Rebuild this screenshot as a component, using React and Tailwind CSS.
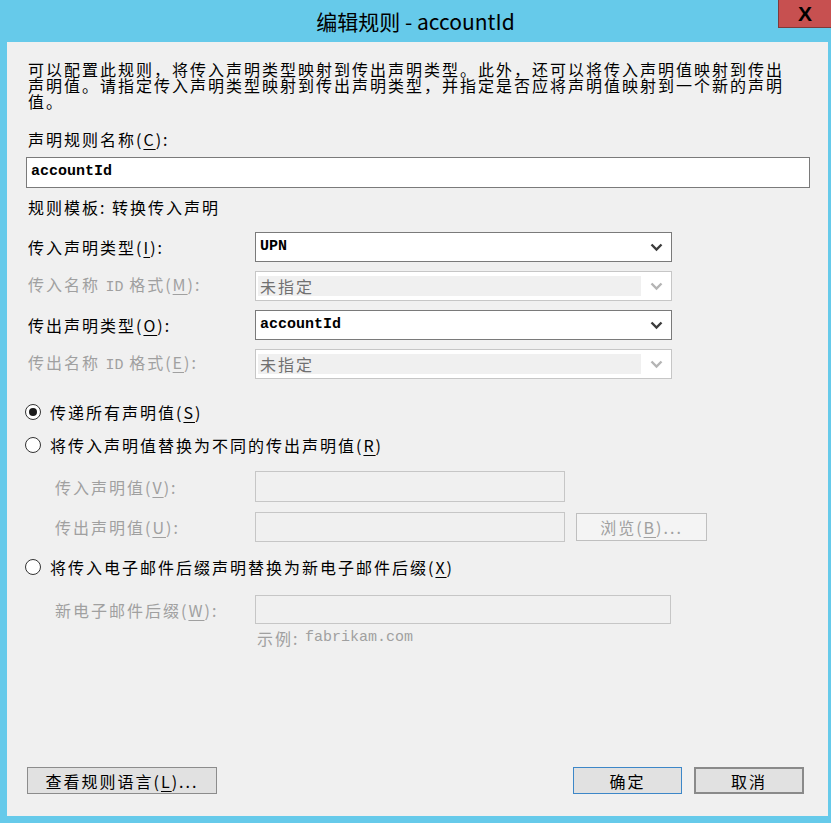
import React from 'react';

const mono = "font-['Liberation_Mono','DejaVu_Sans_Mono',monospace] tracking-normal";

const Key = ({ k }) => <span className="underline underline-offset-[3px] decoration-1">{k}</span>;

const Chevron = ({ disabled }) => (
  <svg width="13" height="9" viewBox="0 0 13 9">
    <path d="M1.5 1.5 L6.5 6.5 L11.5 1.5" stroke={disabled ? '#b4b4b4' : '#3c3c3c'} strokeWidth="2.4" fill="none" />
  </svg>
);

const Select = ({ value, disabled }) => {
  if (disabled) {
    return (
      <div className="w-[417px] h-[30px] border border-[#c6c6c6] bg-white flex items-stretch py-[4px] pl-[2px]">
        <div className="flex-1 bg-[#f0f0f0] flex items-center pl-[2px] text-[#707070]">{value}</div>
        <div className="w-[30px] flex items-center justify-center">
          <Chevron disabled />
        </div>
      </div>
    );
  }
  return (
    <div className="w-[417px] h-[30px] border border-[#7a7a7a] bg-white flex items-center">
      <div className={`flex-1 pl-[4px] text-[15px] font-bold text-black ${mono}`}>{value}</div>
      <div className="w-[30px] flex items-center justify-center">
        <Chevron />
      </div>
    </div>
  );
};

const Radio = ({ checked, children }) => (
  <div className="h-[20px] flex items-center -ml-[3px]">
    <div className="w-[16px] h-[16px] rounded-full border border-[#333] bg-white flex items-center justify-center">
      {checked && <div className="w-[8px] h-[8px] rounded-full bg-[#1a1a1a]" />}
    </div>
    <span className="ml-[9px] text-black">{children}</span>
  </div>
);

const Row = ({ label, gray, indent, children, className = '' }) => (
  <div className={`flex items-center ${className}`}>
    <div className={`${indent ? 'w-[200px] ml-[27px]' : 'w-[227px]'} ${gray ? 'text-[#a0a0a0]' : 'text-black'}`}>
      {label}
    </div>
    {children}
  </div>
);

const DisabledInput = ({ w, h }) => (
  <div className={`${w} ${h} border border-[#c6c6c6] bg-[#f0f0f0]`} />
);

export default function App() {
  return (
    <div className="w-[831px] h-[823px] bg-[#66caea] flex flex-col font-['Noto_Sans_CJK_SC','Noto_Sans',sans-serif]">
      {/* title bar */}
      <div className="relative h-[42px] flex items-center justify-center">
        <span className="text-[21px] text-black leading-none">编辑规则 - accountId</span>
        <div className="absolute right-0 top-0 w-[53px] h-[28px] bg-[#c75050] border-l border-b border-[#7d3a3a] flex items-center justify-center">
          <span className="text-[21px] font-bold text-black font-['Liberation_Sans',sans-serif] leading-none">X</span>
        </div>
      </div>

      {/* body */}
      <div className="ml-[7px] mr-[3px] h-[774px] bg-[#f0f0f0] flex flex-col pl-[21px] pb-[22px] text-[16px] tracking-[2px]">
        <div className="mt-[19px] text-[16px] tracking-[2px] leading-[16px] text-black whitespace-nowrap">
          <div>可以配置此规则，将传入声明类型映射到传出声明类型。此外，还可以将传入声明值映射到传出</div>
          <div>声明值。请指定传入声明类型映射到传出声明类型，并指定是否应将声明值映射到一个新的声明</div>
          <div>值。</div>
        </div>

        <div className="mt-[20px] h-[20px] flex items-center">
          声明规则名称(<Key k="C" />):
        </div>
        <div className="mt-[8px] -ml-[2px] w-[784px] h-[31px] border border-[#7a7a7a] bg-white flex items-center pl-[4px]">
          <span className={`text-[15px] font-bold text-black ${mono}`}>accountId</span>
        </div>
        <div className="mt-[9px] h-[20px] flex items-center">规则模板:&nbsp;转换传入声明</div>

        <Row label={<>传入声明类型(<Key k="I" />):</>} className="mt-[15px]">
          <Select value="UPN" />
        </Row>
        <Row
          gray
          label={<>传入名称 <span className={`${mono} text-[15px]`}>ID</span> 格式(<Key k="M" />):</>}
          className="mt-[9px]"
        >
          <Select value="未指定" disabled />
        </Row>
        <Row label={<>传出声明类型(<Key k="O" />):</>} className="mt-[9px]">
          <Select value="accountId" />
        </Row>
        <Row
          gray
          label={<>传出名称 <span className={`${mono} text-[15px]`}>ID</span> 格式(<Key k="E" />):</>}
          className="mt-[9px]"
        >
          <Select value="未指定" disabled />
        </Row>

        <div className="mt-[23px]">
          <Radio checked>传递所有声明值(<Key k="S" />)</Radio>
        </div>
        <div className="mt-[13px]">
          <Radio>将传入声明值替换为不同的传出声明值(<Key k="R" />)</Radio>
        </div>

        <Row gray indent label={<>传入声明值(<Key k="V" />):</>} className="mt-[16px]">
          <DisabledInput w="w-[310px]" h="h-[31px]" />
        </Row>
        <Row gray indent label={<>传出声明值(<Key k="U" />):</>} className="mt-[10px]">
          <DisabledInput w="w-[310px]" h="h-[30px]" />
          <div className="ml-[11px] w-[131px] h-[28px] border border-[#bfbfbf] bg-[#f4f4f4] flex items-center justify-center text-[#a0a0a0]">
            浏览(<Key k="B" />)...
          </div>
        </Row>

        <div className="mt-[15px]">
          <Radio>将传入电子邮件后缀声明替换为新电子邮件后缀(<Key k="X" />)</Radio>
        </div>
        <Row gray indent label={<>新电子邮件后缀(<Key k="W" />):</>} className="mt-[18px]">
          <DisabledInput w="w-[416px]" h="h-[29px]" />
        </Row>
        <div className="mt-[5px] ml-[229px] h-[18px] flex items-center text-[#a0a0a0]">
          示例:&nbsp;<span className={`${mono} text-[15px]`}>fabrikam.com</span>
        </div>

        <div className="mt-auto flex items-center pr-[24px]">
          <div className="-ml-[1px] w-[190px] h-[27px] border border-[#8c8c8c] bg-[#e1e1e1] flex items-center justify-center text-black">
            查看规则语言(<Key k="L" />)...
          </div>
          <div className="ml-auto w-[109px] h-[27px] border border-[#3d87c8] bg-[#e1e1e1] flex items-center justify-center text-black">
            确定
          </div>
          <div className="ml-[12px] w-[110px] h-[27px] border-2 border-[#8a8a8a] bg-[#e1e1e1] flex items-center justify-center text-black">
            取消
          </div>
        </div>
      </div>
    </div>
  );
}
